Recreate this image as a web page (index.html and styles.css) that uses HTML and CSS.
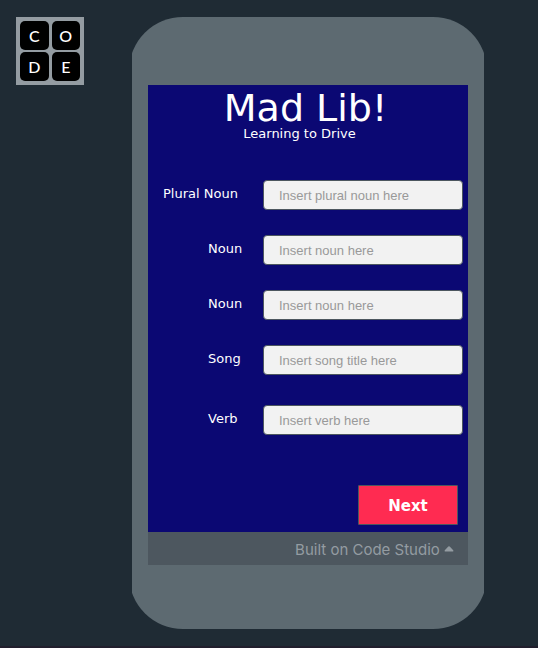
FILE: index.html
```html
<!DOCTYPE html>
<html lang="en">
<head>
  <meta charset="utf-8">
  <meta name="viewport" content="width=device-width, initial-scale=1">
  <title>Mad Lib!</title>
  <link rel="stylesheet" href="styles.css">
</head>
<body>
  <div class="page">
    <a class="logo" href="#" aria-label="Code.org">
      <span>C</span><span>O</span><span>D</span><span>E</span>
    </a>
    <main class="phone">
      <form class="screen">
        <header class="heading">
          <h1>Mad Lib!</h1>
          <p>Learning to Drive</p>
        </header>
        <div class="fields">
          <div class="field wide"><label for="plural">Plural Noun</label><input id="plural" type="text" placeholder="Insert plural noun here"></div>
          <div class="field"><label for="noun1">Noun</label><input id="noun1" type="text" placeholder="Insert noun here"></div>
          <div class="field"><label for="noun2">Noun</label><input id="noun2" type="text" placeholder="Insert noun here"></div>
          <div class="field"><label for="song">Song</label><input id="song" type="text" placeholder="Insert song title here"></div>
          <div class="field last"><label for="verb">Verb</label><input id="verb" type="text" placeholder="Insert verb here"></div>
        </div>
        <button class="next" type="button">Next</button>
      </form>
      <footer class="footer">
        <a href="#">Built on Code Studio
          <svg class="caret" viewBox="0 0 10 6" aria-hidden="true"><path d="M4.3.5Q5-.2 5.7.5L9.2 4.2Q9.9 5.5 8.8 5.5H1.2Q.1 5.5.8 4.2Z"/></svg>
        </a>
      </footer>
    </main>
  </div>
</body>
</html>
```
FILE: styles.css
```css
* {
  box-sizing: border-box;
}

body {
  margin: 0;
  background: #1f2b34;
  font-family: Verdana, "DejaVu Sans", sans-serif;
}

.page {
  display: grid;
  grid-template-columns: 68px 352px;
  column-gap: 48px;
  align-items: start;
  min-height: 100vh;
  padding: 17px 16px;
  border-bottom: 3px solid #211f2d;
}

.logo {
  display: grid;
  grid-template-columns: 1fr 1fr;
  gap: 2px 3px;
  padding: 4px;
  background: #949ca2;
  color: #fff;
  font: 500 16px/29px Lato, sans-serif;
  text-align: center;
  text-decoration: none;
}

.logo span {
  height: 29px;
  border-radius: 5px;
  background: #000;
}

.phone {
  position: relative;
  overflow: hidden;
  padding: 68px 16px 64px;
}

/* The body is a little wider than the frame, so its curves end at the sides. */
.phone::before {
  content: "";
  position: absolute;
  inset: 0 -3px;
  z-index: -1;
  border-radius: 54px;
  background: #5d6a71;
}

.screen {
  display: flex;
  flex-direction: column;
  padding: 2px 5px 7px 15px;
  background: #0b0873;
  color: #fff;
  font-size: 13px;
}

.heading {
  text-align: center;
}

.heading h1 {
  margin: 0 15px 0 0;
  font-size: 38px;
  font-weight: 400;
  line-height: 42px;
}

.heading p {
  margin: 0 27px 0 0;
  line-height: 10px;
}

.fields {
  display: grid;
  gap: 25px;
  margin-top: 41px;
}

.field {
  display: grid;
  grid-template-columns: 55px 200px;
  justify-content: end;
  align-items: center;
}

.field.wide {
  grid-template-columns: 100px 200px;
}

.field.last {
  margin-top: 5px;
}

.field label {
  line-height: 16px;
  padding-bottom: 2px;
}

.field input {
  width: 100%;
  height: 30px;
  padding: 0 15px;
  border: 1px solid #4d575f;
  border-radius: 4px;
  background: #f2f2f2;
  color: #333;
  font: 13px "Liberation Sans", Arial, sans-serif;
}

.field input::placeholder {
  color: #999;
}

.next {
  align-self: flex-end;
  width: 100px;
  height: 40px;
  margin: 50px 5px 0 0;
  padding: 2px 0 0;
  border: 1px solid #4d575f;
  border-radius: 1px;
  background: #ff2b51;
  color: #fff;
  font: 900 15px "Arial Black", "DejaVu Sans", sans-serif;
}

.footer {
  height: 33px;
  padding: 0 14px;
  background: #4d575f;
  text-align: right;
}

.footer a {
  color: #949ca2;
  font: 15px/36px Inter, sans-serif;
  text-decoration: none;
}

.caret {
  width: 10px;
  height: 6px;
  vertical-align: 3px;
  fill: currentColor;
}
```
